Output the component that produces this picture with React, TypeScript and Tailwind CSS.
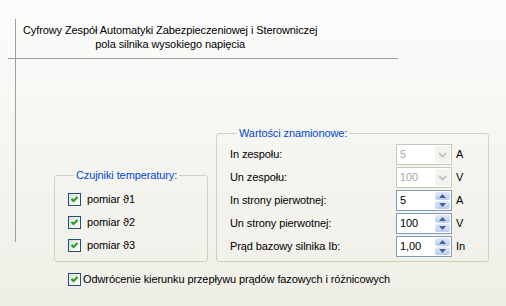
import React from 'react';

function XpCheck() {
  return (
    <span className="flex h-[13px] w-[13px] shrink-0 items-center justify-center border border-[#1c5180] bg-linear-to-br from-[#dcdcd7] to-white">
      <svg width="9" height="9" viewBox="0 0 9 9">
        <path d="M1.5 4 L3.5 6 L7.5 2" stroke="#21a121" strokeWidth="2" fill="none" />
      </svg>
    </span>
  );
}

function Combo({ value }: { value: string }) {
  return (
    <div className="flex h-[21px] w-[56px] items-center border border-[#c9c7ba] bg-white">
      <span className="flex-1 pl-[3px] text-[#aca899]">{value}</span>
      <span className="mr-px flex h-[17px] w-[15px] items-center justify-center bg-[#f4f3ee]">
        <svg width="9" height="6" viewBox="0 0 9 6">
          <path d="M1 1 L4.5 4.5 L8 1" stroke="#c9c7ba" strokeWidth="2" fill="none" />
        </svg>
      </span>
    </div>
  );
}

function Spin({ value }: { value: string }) {
  return (
    <div className="flex h-[21px] w-[56px] items-center border border-[#7f9db9] bg-white">
      <span className="flex-1 pl-[3px]">{value}</span>
      <span className="mr-px flex h-[17px] w-[15px] flex-col gap-px">
        <span className="flex flex-1 items-center justify-center rounded-[2px] bg-linear-to-b from-[#e1eafe] to-[#b9cbf5]">
          <svg width="7" height="4" viewBox="0 0 7 4">
            <path d="M0 4 L3.5 0 L7 4 Z" fill="#4d6185" />
          </svg>
        </span>
        <span className="flex flex-1 items-center justify-center rounded-[2px] bg-linear-to-b from-[#e1eafe] to-[#b9cbf5]">
          <svg width="7" height="4" viewBox="0 0 7 4">
            <path d="M0 0 L3.5 4 L7 0 Z" fill="#4d6185" />
          </svg>
        </span>
      </span>
    </div>
  );
}

export default function App() {
  const ratings = [
    { label: 'In zespołu:', value: '5', unit: 'A', disabled: true },
    { label: 'Un zespołu:', value: '100', unit: 'V', disabled: true },
    { label: 'In strony pierwotnej:', value: '5', unit: 'A', disabled: false },
    { label: 'Un strony pierwotnej:', value: '100', unit: 'V', disabled: false },
    { label: 'Prąd bazowy silnika Ib:', value: '1,00', unit: 'In', disabled: false },
  ];
  const sensors = ['pomiar ϑ1', 'pomiar ϑ2', 'pomiar ϑ3'];

  return (
    <div className="h-[306px] w-[506px] overflow-hidden bg-linear-to-b from-[#fcfcfc] to-[#efeee6] font-['Liberation_Sans','DejaVu_Sans',Arial,sans-serif] text-[11px] leading-[13px] tracking-[-0.1px] text-black">
      <div className="mt-[19px] ml-[8px] w-[390px] border-b border-[#a0a0a0]">
        <div className="ml-[7px] h-[39px] border-l border-[#a0a0a0] pt-[4px] pl-[7px]">
          <div className="inline-block text-center leading-[14px]">
            Cyfrowy Zespół Automatyki Zabezpieczeniowej i Sterowniczej
            <br />
            pola silnika wysokiego napięcia
          </div>
        </div>
      </div>

      <div className="ml-[15px] flex items-start">
        <div className="h-[183px] w-px bg-[#a0a0a0]" />
        <div className="mt-[68px] ml-[38px] flex items-end gap-[8px]">
          <fieldset className="w-[154px] rounded-[3px] border border-[#d0d0bf] pt-[11px] pb-[9px] pl-[13px]">
            <legend className="ml-[6px] px-[2px] text-[#0046d5]">Czujniki temperatury:</legend>
            <div className="flex flex-col gap-[10px]">
              {sensors.map((s) => (
                <div key={s} className="flex h-[13px] items-center gap-[6px]">
                  <XpCheck />
                  <span>{s}</span>
                </div>
              ))}
            </div>
          </fieldset>

          <fieldset className="w-[273px] rounded-[3px] border border-[#d0d0bf] pt-[4px] pb-[4px] pl-[13px]">
            <legend className="ml-[7px] px-[2px] text-[#0046d5]">Wartości znamionowe:</legend>
            <div className="flex flex-col gap-[2px]">
              {ratings.map((r) => (
                <div key={r.label} className="flex h-[21px] items-center">
                  <span className="w-[166px]">{r.label}</span>
                  {r.disabled ? <Combo value={r.value} /> : <Spin value={r.value} />}
                  <span className="ml-[4px]">{r.unit}</span>
                </div>
              ))}
            </div>
          </fieldset>
        </div>
      </div>

      <div className="mt-[11px] ml-[68px] flex items-center gap-[2px]">
        <XpCheck />
        <span>Odwrócenie kierunku przepływu prądów fazowych i różnicowych</span>
      </div>
    </div>
  );
}
